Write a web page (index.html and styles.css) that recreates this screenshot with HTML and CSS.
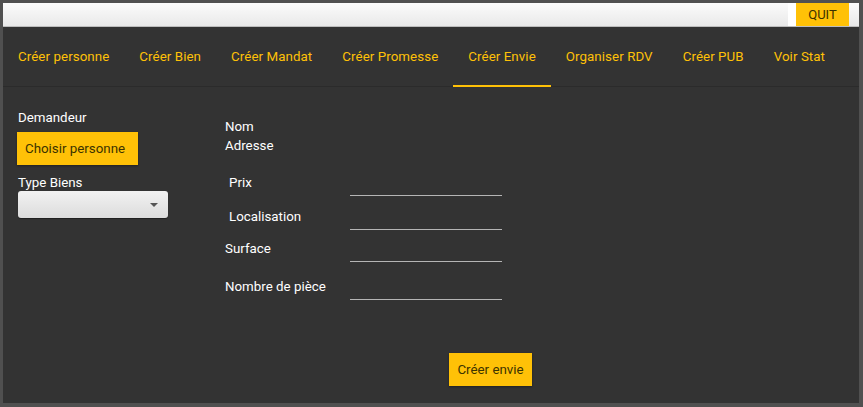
FILE: index.html
```html
<!DOCTYPE html>
<html lang="fr">
<head>
<meta charset="utf-8">
<title>Créer Envie</title>
<link rel="stylesheet" href="styles.css">
</head>
<body>
<div class="app">
  <header class="topbar">
    <span class="quit-gap"></span>
    <button class="quit">QUIT</button>
  </header>
  <nav class="tabs">
    <a class="tab">Créer personne</a>
    <a class="tab">Créer Bien</a>
    <a class="tab">Créer Mandat</a>
    <a class="tab">Créer Promesse</a>
    <a class="tab active">Créer Envie</a>
    <a class="tab">Organiser RDV</a>
    <a class="tab">Créer PUB</a>
    <a class="tab">Voir Stat</a>
  </nav>
  <main class="content">
    <section class="left">
      <div class="label">Demandeur</div>
      <button class="btn choose">Choisir personne</button>
      <div class="label type-label">Type Biens</div>
      <div class="select"><span class="arrow"></span></div>
    </section>
    <section class="middle">
      <div class="info">Nom</div>
      <div class="info">Adresse</div>
      <div class="row row1"><span class="row-label indent">Prix</span><span class="field"></span></div>
      <div class="row row2"><span class="row-label indent">Localisation</span><span class="field"></span></div>
      <div class="row row3"><span class="row-label">Surface</span><span class="field"></span></div>
      <div class="row row4"><span class="row-label">Nombre de pièce</span><span class="field"></span></div>
      <button class="btn submit">Créer envie</button>
    </section>
  </main>
</div>
</body>
</html>
```
FILE: styles.css
```css
* { box-sizing: border-box; }
html, body { margin: 0; padding: 0; }
body {
  width: 863px;
  height: 407px;
  background: #505050;
  padding: 3px 4px 4px 3px;
  font-family: Roboto, "Noto Sans", sans-serif;
  font-size: 13.33px;
  overflow: hidden;
}
.app {
  width: 856px;
  height: 400px;
  background: #333333;
  display: flex;
  flex-direction: column;
}
.topbar {
  height: 24px;
  background: linear-gradient(#fbfbfb, #e9e9e9);
  border-bottom: 1px solid #bdbdbd;
  display: flex;
  justify-content: flex-end;
  padding-right: 10px;
}
.quit-gap {
  width: 8px;
  height: 23px;
  background: #ffffff;
}
.quit {
  width: 53px;
  height: 23px;
  border: 0;
  margin: 0;
  padding: 0;
  background: #ffc107;
  color: #3a3000;
  font-family: Roboto, sans-serif;
  font-size: 13px;
}
.tabs {
  height: 60px;
  display: flex;
  box-shadow: inset 0 -1px 0 #2b2b2b;
}
.tab {
  padding: 1px 15px 0;
  color: #ffc107;
  font-size: 13.33px;
  letter-spacing: 0.07px;
  display: flex;
  align-items: center;
  border-bottom: 2px solid transparent;
}
.tab.active {
  border-bottom-color: #ffc107;
}
.content {
  display: flex;
  padding: 23px 0 0 15px;
}
.left {
  width: 207px;
  display: flex;
  flex-direction: column;
  align-items: flex-start;
}
.label {
  color: #ffffff;
  line-height: 15px;
}
.btn {
  border: 0;
  background: #ffc107;
  color: #3b3300;
  font-family: Roboto, sans-serif;
  font-size: 13.33px;
  height: 33px;
  padding: 0 8px;
  box-shadow: 0 1px 2px rgba(0,0,0,0.35);
}
.choose {
  margin-top: 7px;
  margin-left: -1px;
  width: 121px;
  text-align: left;
}
.type-label {
  margin-top: 10px;
}
.select {
  margin-top: 1px;
  width: 150px;
  height: 27px;
  border-radius: 3px;
  background: linear-gradient(#f2f2f2, #dcdcdc);
  box-shadow: 0 1px 1px rgba(0,0,0,0.4);
  display: flex;
  justify-content: flex-end;
  align-items: center;
  padding-right: 10px;
}
.arrow {
  width: 0;
  height: 0;
  border-left: 4px solid transparent;
  border-right: 4px solid transparent;
  border-top: 4px solid #555;
}
.middle {
  display: flex;
  flex-direction: column;
  align-items: flex-start;
  padding-top: 8px;
}
.info {
  color: #ffffff;
  line-height: 18.6px;
}
.row {
  display: flex;
  align-items: flex-end;
  height: 24px;
}
.row1 { margin-top: 17px; }
.row2 { margin-top: 10px; }
.row3 { margin-top: 8px; }
.row4 { margin-top: 14px; }
.row-label {
  width: 125px;
  color: #ffffff;
  line-height: 15px;
  padding-bottom: 6px;
}
.row-label.indent {
  padding-left: 4px;
}
.field {
  width: 152px;
  height: 24px;
  border-bottom: 1px solid #b5b5b5;
}
.submit {
  margin-top: 53px;
  margin-left: 224px;
  width: 83px;
}
```
